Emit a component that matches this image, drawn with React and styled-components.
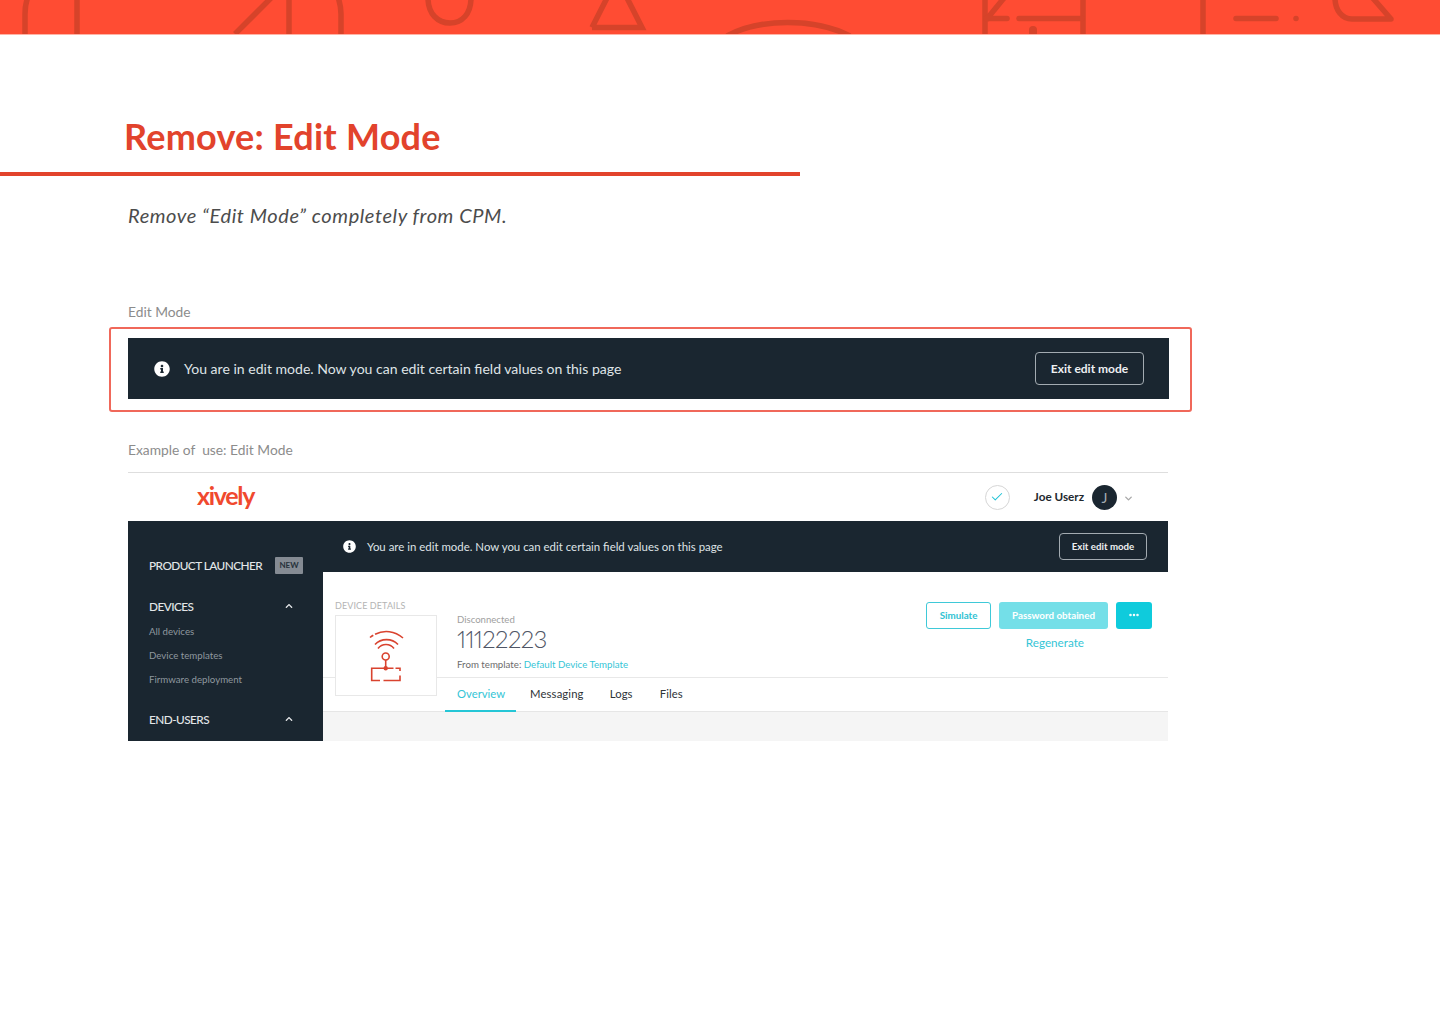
import React from 'react';
import styled, { createGlobalStyle } from 'styled-components';
import { FaInfoCircle, FaChevronUp } from 'react-icons/fa';
import { Check, ChevronDown, Ellipsis } from 'lucide-react';

const GlobalStyle = createGlobalStyle`
  html, body {
    margin: 0;
    padding: 0;
    background: #fff;
  }
  body {
    font-family: Lato, "Open Sans", "Liberation Sans", sans-serif;
    color: #4a4a4a;
  }
  * {
    box-sizing: border-box;
  }
`;

const Page = styled.div`
  width: 1440px;
  height: 1024px;
  overflow: hidden;
`;

const Banner = styled.div`
  height: 35px;
  background: #ff4c33;
  border-bottom: 1px solid #ffb3a6;
  svg {
    display: block;
  }
`;

const Title = styled.h1`
  margin: 79px 0 0 124px;
  font-size: 36px;
  line-height: 44px;
  letter-spacing: 0.24px;
  font-weight: 700;
  color: #e2432c;
`;

const TitleRule = styled.div`
  width: 800px;
  height: 4px;
  margin-top: 14px;
  background: #e2432c;
`;

const Subtitle = styled.p`
  margin: 26px 0 0 128px;
  font-size: 20px;
  line-height: 26px;
  letter-spacing: 0.58px;
  font-style: italic;
  color: #4c4c4c;
`;

const Caption = styled.div`
  margin: ${(p) => p.$top}px 0 0 128px;
  font-size: 13.8px;
  line-height: 18px;
  color: #8c8c8c;
`;

const Highlight = styled.div`
  width: 1083px;
  height: 85px;
  margin: 6px 0 0 109px;
  padding: 9px 21px 0 17px;
  border: 2px solid #f0685a;
  border-radius: 3px;
`;

const EditBar = styled.div`
  display: flex;
  align-items: center;
  height: ${(p) => (p.$small ? 51 : 61)}px;
  padding: ${(p) => (p.$small ? '0 21px 0 20px' : '0 25px 0 26px')};
  background: #1a2630;
  color: #dfe3e6;
  font-size: ${(p) => (p.$small ? 11.43 : 14.05)}px;
  svg {
    flex: none;
    color: #fff;
  }
`;

const EditText = styled.span`
  margin-left: ${(p) => (p.$small ? 11 : 14)}px;
  flex: 1;
`;

const ExitButton = styled.div`
  display: flex;
  align-items: center;
  justify-content: center;
  width: ${(p) => (p.$small ? 88 : 109)}px;
  height: ${(p) => (p.$small ? 27 : 33)}px;
  padding-bottom: 1px;
  border: 1px solid #a3abb1;
  border-radius: 4px;
  color: #eef0f2;
  font-size: ${(p) => (p.$small ? 9.7 : 12)}px;
  font-weight: 700;
`;

const Shot = styled.div`
  width: 1040px;
  margin: 13px 0 0 128px;
  border-top: 1.5px solid #dedede;
`;

const ShotHeader = styled.div`
  display: flex;
  align-items: center;
  height: 48px;
  padding: 0 34px 0 69px;
`;

const Logo = styled.div`
  font-size: 25px;
  font-weight: 700;
  letter-spacing: -1.3px;
  color: #f0492e;
  flex: 1;
  margin-top: -4px;
`;

const CheckCircle = styled.div`
  display: flex;
  align-items: center;
  justify-content: center;
  width: 25px;
  height: 25px;
  border: 1px solid #d6d6d6;
  border-radius: 50%;
  svg {
    color: #1fc3d6;
  }
`;

const UserName = styled.span`
  margin-left: 24px;
  margin-top: -3px;
  font-size: 11.7px;
  font-weight: 700;
  color: #22282e;
`;

const Avatar = styled.div`
  display: flex;
  align-items: center;
  justify-content: center;
  width: 25px;
  height: 25px;
  margin-left: 8px;
  border-radius: 50%;
  background: #1a2630;
  color: #a4acb2;
  font-size: 14px;
`;

const UserCaret = styled.div`
  display: flex;
  margin: 3px 0 0 6px;
  color: #a8a8a8;
`;

const ShotBody = styled.div`
  display: flex;
  height: 220px;
`;

const Sidebar = styled.div`
  width: 195px;
  flex: none;
  padding: 35px 20px 0 21px;
  background: #1a2630;
`;

const SideRow = styled.div`
  display: flex;
  align-items: center;
  justify-content: space-between;
  height: 18px;
  margin-top: ${(p) => p.$top || 0}px;
  svg {
    color: #e6e8ea;
    margin-right: 10px;
  }
`;

const SideHeading = styled.span`
  font-size: 11.8px;
  font-weight: 500;
  letter-spacing: -0.55px;
  color: #e3e6e8;
`;

const NewTag = styled.span`
  display: flex;
  align-items: center;
  justify-content: center;
  width: 28px;
  height: 17px;
  border-radius: 1px;
  background: #858b93;
  color: #27323b;
  font-size: 8px;
  font-weight: 700;
`;

const SideLink = styled.div`
  margin-top: ${(p) => p.$top}px;
  font-size: 9.7px;
  line-height: 12px;
  color: #8f989f;
`;

const Main = styled.div`
  flex: 1;
  display: flex;
  flex-direction: column;
  background: #f5f5f5;
`;

const DetailsHead = styled.div`
  display: flex;
  height: 106px;
  padding: 28px 16px 0 12px;
  background: #fff;
  border-bottom: 1px solid #e8e8e8;
`;

const DeviceColumn = styled.div`
  width: 102px;
  flex: none;
`;

const DeviceLabel = styled.div`
  font-size: 9px;
  line-height: 11px;
  letter-spacing: 0.1px;
  color: #b4b4b4;
`;

const DeviceBox = styled.div`
  position: relative;
  z-index: 1;
  display: flex;
  align-items: center;
  justify-content: center;
  width: 102px;
  height: 81px;
  margin-top: 4px;
  border: 1px solid #e8e8e8;
  background: #fff;
`;

const DeviceInfo = styled.div`
  flex: 1;
  padding: 14px 0 0 20px;
`;

const Status = styled.div`
  font-size: 9.6px;
  line-height: 12px;
  color: #a0a0a0;
`;

const DeviceId = styled.div`
  font-size: 24px;
  line-height: 26px;
  font-weight: 300;
  letter-spacing: -0.6px;
  font-variant-numeric: proportional-nums;
  color: #4f5565;
`;

const TemplateLine = styled.div`
  margin-top: 6px;
  font-size: 9.7px;
  line-height: 12px;
  color: #6b6b6b;
`;

const TemplateLink = styled.span`
  color: #35c5d6;
`;

const ActionColumn = styled.div`
  display: flex;
  flex-direction: column;
  align-items: flex-end;
  padding-top: 2px;
`;

const ActionRow = styled.div`
  display: flex;
  gap: 8px;
`;

const ActionButton = styled.div`
  display: flex;
  align-items: center;
  justify-content: center;
  width: ${(p) => p.$width}px;
  height: 27px;
  padding-bottom: 1px;
  border-radius: 3px;
  font-size: 9.8px;
  font-weight: 700;
  border: 1px solid ${(p) => (p.$variant === 'outline' ? '#3fc9d8' : 'transparent')};
  color: ${(p) => (p.$variant === 'outline' ? '#2fc2d3' : '#fff')};
  background: ${(p) =>
    p.$variant === 'outline' ? '#fff' : p.$variant === 'muted' ? '#74dfe8' : '#0fcbdc'};
`;

const Regenerate = styled.div`
  margin: 6px 68px 0 0;
  font-size: 11.7px;
  line-height: 14px;
  color: #35c5d6;
`;

const Tabs = styled.div`
  display: flex;
  height: 34px;
  padding-left: 122px;
  background: #fff;
  border-bottom: 1px solid #e6e6e6;
`;

const Tab = styled.div`
  display: flex;
  align-items: center;
  height: 34px;
  padding: 0 ${(p) => (p.$active ? 11 : 12)}px 2px 12px;
  margin-right: ${(p) => p.$gap}px;
  font-size: 11.3px;
  letter-spacing: ${(p) => (p.$active ? 0 : 0.12)}px;
  color: ${(p) => (p.$active ? '#35c5d6' : '#2e3338')};
  border-bottom: 2px solid ${(p) => (p.$active ? '#25c6d6' : 'transparent')};
`;

const BannerPattern = () => (
  <svg width="1440" height="34" viewBox="0 0 1440 34" fill="none" stroke="#d6432a" strokeWidth="5.5" strokeLinecap="round">
    <g strokeLinecap="butt">
      <path d="M25 34V14Q25 4 28 -3" />
      <path d="M77 -2V34" />
      <path d="M235 34L271 -2" />
      <path d="M289 -2V34" />
      <path d="M341 34V14Q341 6 338 -3" />
      <path d="M428 -2C428 14 438 23 450 23C462 23 471 14 471 -2" />
      <path d="M592 27.5H642L626 -4M592 27.5L608 -4" />
      <path d="M727 36C760 18 815 18 850 36" />
      <path d="M985 -2V36" />
      <path d="M1083 -2V36" />
      <path d="M1203 -2V36" />
    </g>
    <path d="M1004 -2L986 20" strokeLinecap="butt" />
    <path d="M986 18.5H1007" />
    <path d="M1019 18.5H1082" />
    <path d="M1033 30V36" strokeWidth="8" />
    <path d="M1236 18.5H1276" />
    <path d="M1296 18.5V18.6" />
    <path d="M1335 -2C1335 10 1342 19 1352 19H1391L1371 -4" strokeLinejoin="round" />
  </svg>
);

const DeviceIcon = () => (
  <svg width="36" height="52" viewBox="0 0 36 52" fill="none" stroke="#d9432f" strokeWidth="1.6">
    <path d="M2 7.5C12 -0.5 25 -0.5 35 8" strokeDasharray="4 2 40" />
    <path d="M7 14.5C13 8 24 8 30 14.5" />
    <path d="M10 18.5C14 13.2 22 13.2 26 18.5" />
    <circle cx="17.7" cy="26.5" r="3.5" />
    <path d="M17.7 30V38.2" />
    <circle cx="17.7" cy="38.2" r="1.4" fill="#d9432f" />
    <path d="M25.5 38.2H3.7V50.5H12" />
    <path d="M27.5 38.2H32V41" />
    <path d="M32 45.5V50.5H15.5" />
  </svg>
);

const App = () => {
  return (
    <Page>
      <GlobalStyle />
      <Banner>
        <BannerPattern />
      </Banner>

      <Title>Remove: Edit Mode</Title>
      <TitleRule />
      <Subtitle>Remove “Edit Mode” completely from CPM.</Subtitle>

      <Caption $top={75}>Edit Mode</Caption>
      <Highlight>
        <EditBar>
          <FaInfoCircle size={16} />
          <EditText>You are in edit mode. Now you can edit certain field values on this page</EditText>
          <ExitButton>Exit edit mode</ExitButton>
        </EditBar>
      </Highlight>

      <Caption $top={29}>Example of &nbsp;use: Edit Mode</Caption>
      <Shot>
        <ShotHeader>
          <Logo>xively</Logo>
          <CheckCircle>
            <Check size={14} strokeWidth={1.8} />
          </CheckCircle>
          <UserName>Joe Userz</UserName>
          <Avatar>J</Avatar>
          <UserCaret>
            <ChevronDown size={11} strokeWidth={3} />
          </UserCaret>
        </ShotHeader>
        <ShotBody>
          <Sidebar>
            <SideRow>
              <SideHeading>PRODUCT LAUNCHER</SideHeading>
              <NewTag>NEW</NewTag>
            </SideRow>
            <SideRow $top={23}>
              <SideHeading>DEVICES</SideHeading>
              <FaChevronUp size={8} />
            </SideRow>
            <SideLink $top={10}>All devices</SideLink>
            <SideLink $top={12}>Device templates</SideLink>
            <SideLink $top={12}>Firmware deployment</SideLink>
            <SideRow $top={25}>
              <SideHeading>END-USERS</SideHeading>
              <FaChevronUp size={8} />
            </SideRow>
          </Sidebar>
          <Main>
            <EditBar $small>
              <FaInfoCircle size={13} />
              <EditText $small>You are in edit mode. Now you can edit certain field values on this page</EditText>
              <ExitButton $small>Exit edit mode</ExitButton>
            </EditBar>
            <DetailsHead>
              <DeviceColumn>
                <DeviceLabel>DEVICE DETAILS</DeviceLabel>
                <DeviceBox>
                  <DeviceIcon />
                </DeviceBox>
              </DeviceColumn>
              <DeviceInfo>
                <Status>Disconnected</Status>
                <DeviceId>11122223</DeviceId>
                <TemplateLine>
                  From template: <TemplateLink>Default Device Template</TemplateLink>
                </TemplateLine>
              </DeviceInfo>
              <ActionColumn>
                <ActionRow>
                  <ActionButton $variant="outline" $width={65}>Simulate</ActionButton>
                  <ActionButton $variant="muted" $width={109}>Password obtained</ActionButton>
                  <ActionButton $width={36}>
                    <Ellipsis size={12} strokeWidth={3} />
                  </ActionButton>
                </ActionRow>
                <Regenerate>Regenerate</Regenerate>
              </ActionColumn>
            </DetailsHead>
            <Tabs>
              <Tab $active $gap={2}>Overview</Tab>
              <Tab $gap={2}>Messaging</Tab>
              <Tab $gap={3}>Logs</Tab>
              <Tab $gap={0}>Files</Tab>
            </Tabs>
          </Main>
        </ShotBody>
      </Shot>
    </Page>
  );
};

export default App;
